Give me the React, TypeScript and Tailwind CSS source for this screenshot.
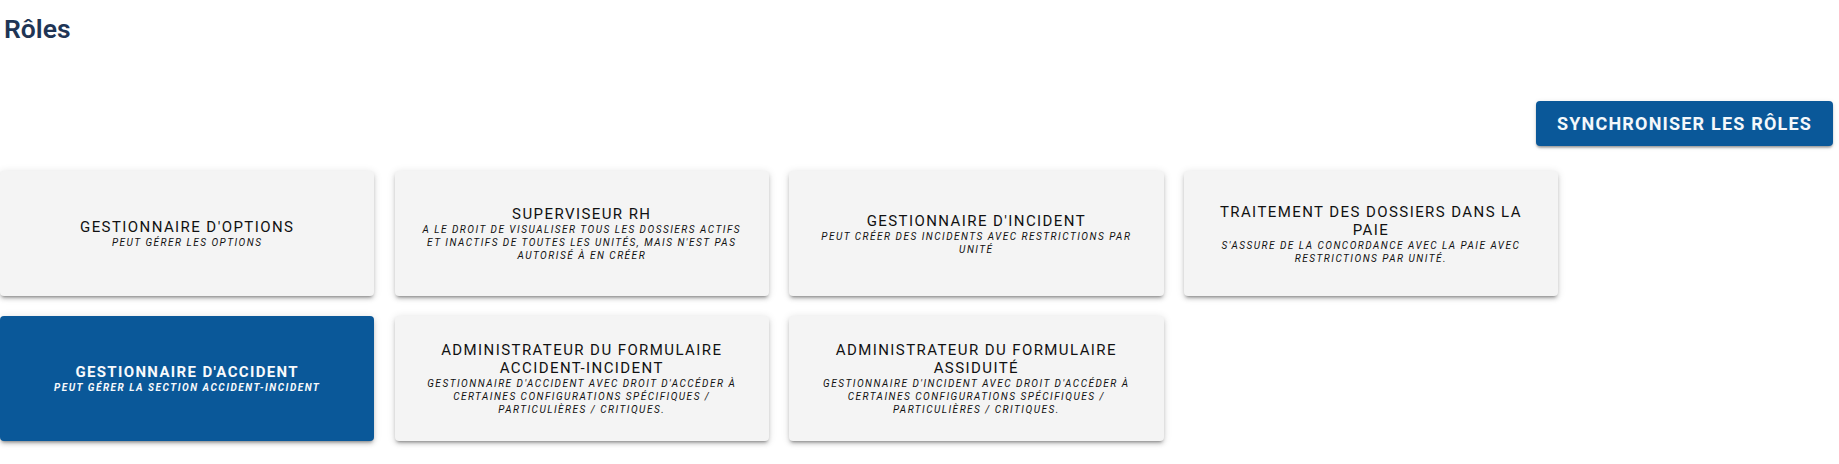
const cards = [
  { t: "Gestionnaire d'options", s: "Peut gérer les options" },
  { t: "Superviseur RH", s: "A le droit de visualiser tous les dossiers actifs et inactifs de toutes les unités, mais n'est pas autorisé à en créer" },
  { t: "Gestionnaire d'incident", s: "Peut créer des incidents avec restrictions par unité" },
  { t: "Traitement des dossiers dans la paie", s: "S'assure de la concordance avec la paie avec restrictions par unité." },
  { t: "Gestionnaire d'accident", s: "Peut gérer la section accident-incident", active: true },
  { t: "Administrateur du formulaire accident-incident", s: "Gestionnaire d'accident avec droit d'accéder à certaines configurations spécifiques / particulières / critiques." },
  { t: "Administrateur du formulaire assiduité", s: "Gestionnaire d'incident avec droit d'accéder à certaines configurations spécifiques / particulières / critiques." },
];

export default function App() {
  return (
    <div className="h-[464px] w-[1839px] overflow-hidden bg-white font-['Roboto',sans-serif]">
      <h1 className="pl-1 pt-[13px] text-[26.5px] leading-[32px] font-semibold text-[#1f3555]">Rôles</h1>
      <div className="mt-[56px] flex justify-end pr-[6px]">
        <button className="h-[45px] w-[297px] rounded-[4px] bg-[#0a5899] text-[18px] font-bold tracking-[1.2px] text-[#f4f8fb] uppercase shadow-[0_3px_3px_-2px_rgba(0,0,0,0.3),0_2px_2px_0_rgba(0,0,0,0.14),0_1px_5px_0_rgba(0,0,0,0.12)]">
          Synchroniser les rôles
        </button>
      </div>
      <div className="mt-[24.5px] grid grid-cols-[repeat(4,374.4px)] gap-x-[20.2px] gap-y-[20px]">
        {cards.map((c) => (
          <div
            key={c.t}
            className={`flex h-[125px] flex-col items-center justify-center rounded-[4px] px-[26px] pt-[1px] text-center uppercase shadow-[0_3px_3px_-2px_rgba(0,0,0,0.35),0_3px_4px_0_rgba(0,0,0,0.14),0_1px_8px_0_rgba(0,0,0,0.12)] ${
              c.active ? "bg-[#0a5899] text-[#f8fafc]" : "bg-[#f4f4f4] text-[#111111]"
            }`}
          >
            <div className={`text-[15px] leading-[18px] ${c.active ? "font-bold tracking-[1.35px]" : "font-normal tracking-[1.42px]"}`}>{c.t}</div>
            <div className={`text-[10px] leading-[13px] italic ${c.active ? "font-bold tracking-[1.5px]" : "font-normal tracking-[1.5px]"}`}>{c.s}</div>
          </div>
        ))}
      </div>
    </div>
  );
}
